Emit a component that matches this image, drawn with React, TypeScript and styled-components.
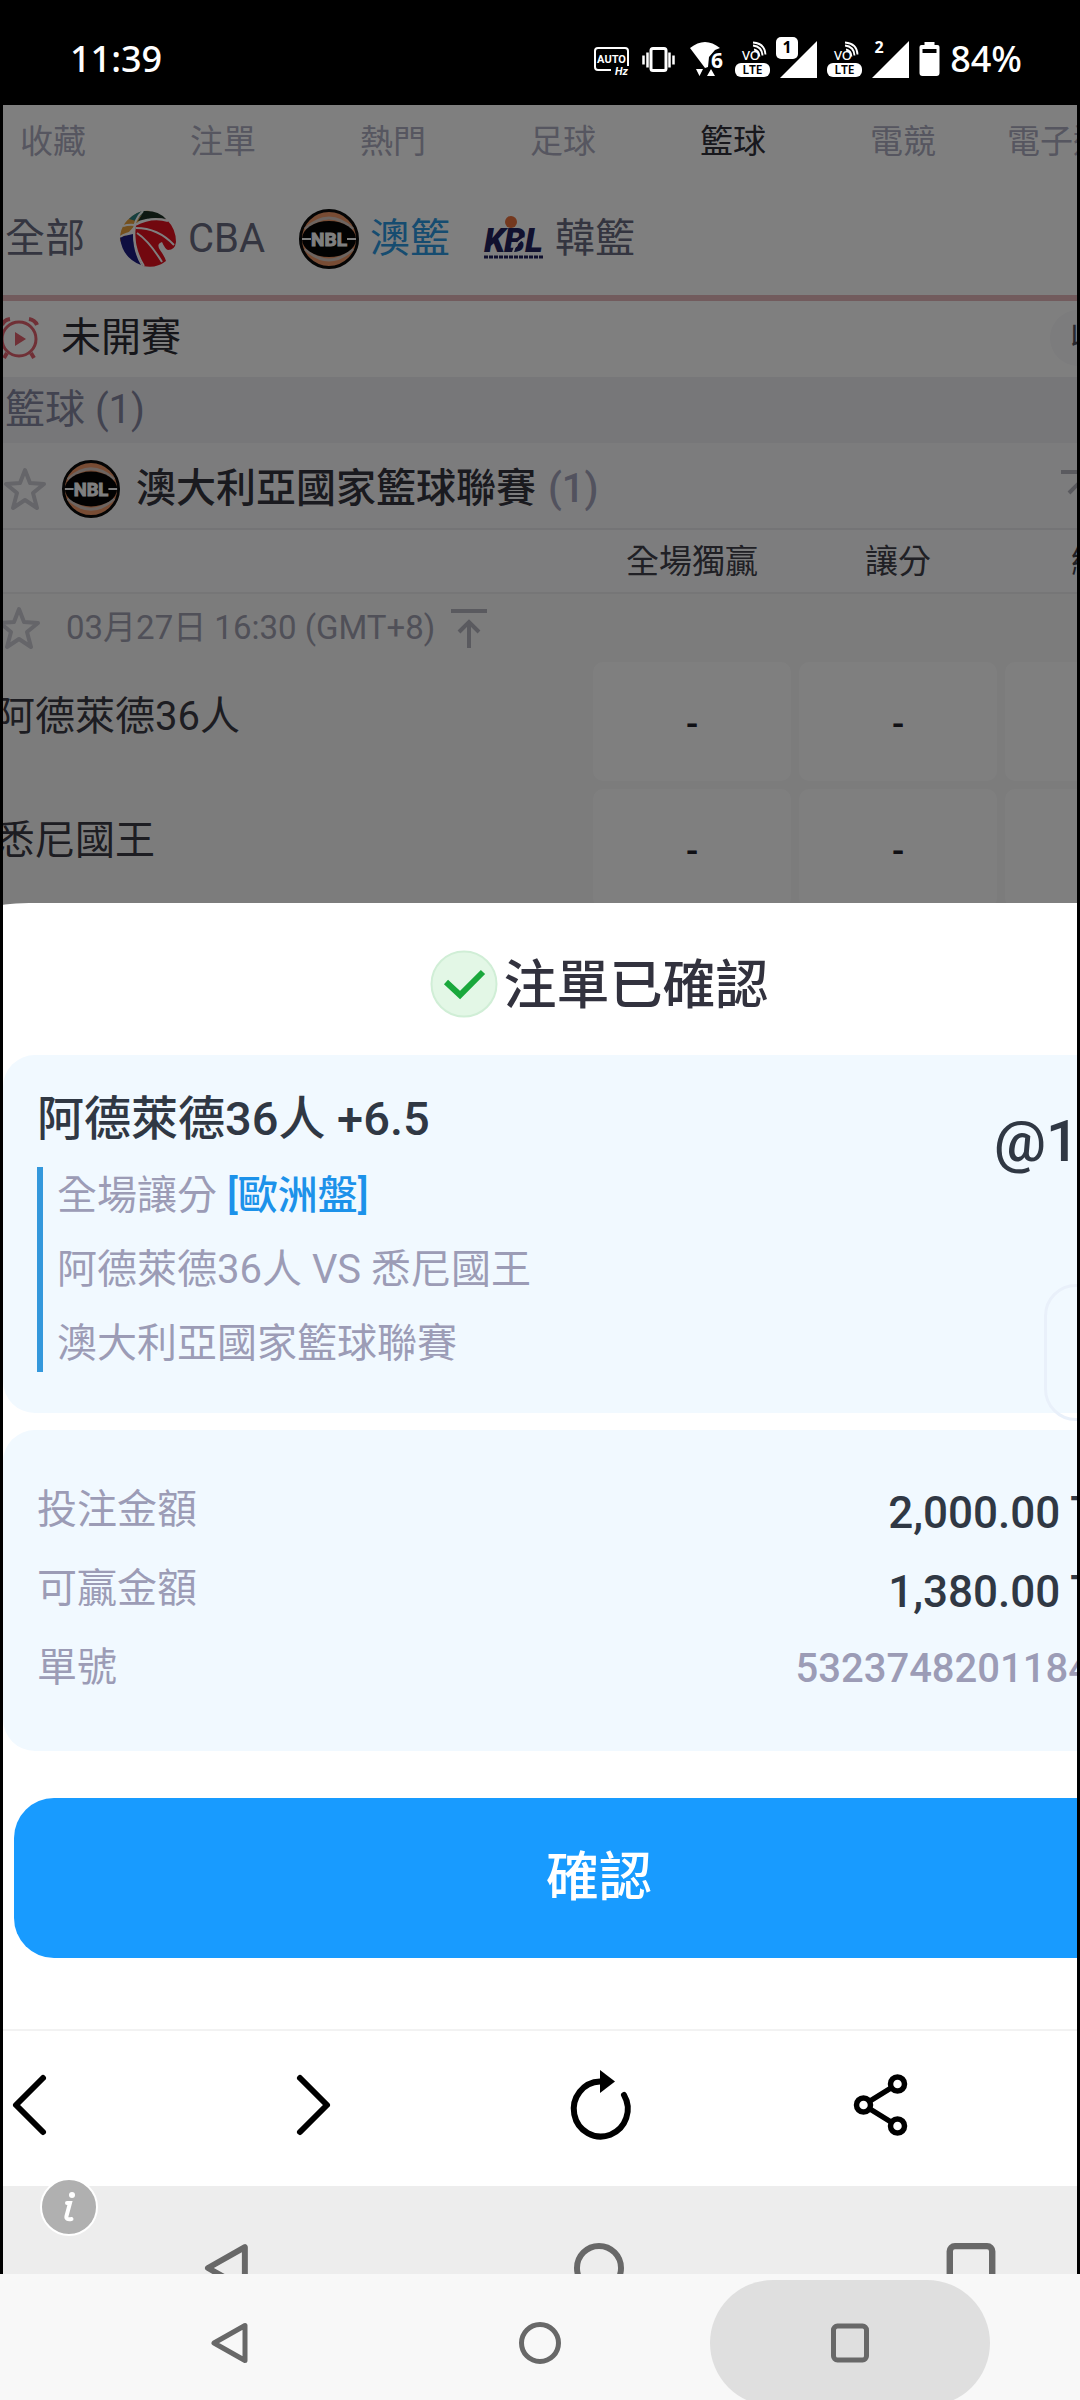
import React from "react";
import styled, { createGlobalStyle } from "styled-components";

const cjk = `Roboto, "Noto Sans CJK TC", sans-serif`;
const system = `"Noto Sans", "Noto Sans CJK TC", sans-serif`;

const Global = createGlobalStyle`
  * { box-sizing: border-box; }
  html, body { margin: 0; background: #000; }
  body { font-family: ${cjk}; overflow-x: hidden; }
  button { border: 0; background: none; padding: 0; margin: 0; font: inherit; color: inherit; cursor: pointer; }
  a { color: inherit; text-decoration: none; }
  svg { display: block; flex: none; overflow: visible; }
  h1, h2, h3, p { margin: 0; padding: 0; font-weight: inherit; font-size: inherit; }
`;

const Screen = styled.div`
  min-height: 100vh;
  display: flex;
  flex-direction: column;
`;

/* ---------- phone status bar ---------- */
const StatusBar = styled.header`
  height: 105px;
  padding: 13px 58px 0 70px;
  display: flex;
  align-items: center;
  justify-content: space-between;
  color: #fff;
  font: 500 36px/48px ${system};
`;
const StatusIcons = styled.div`
  display: flex;
  align-items: center;
  gap: 10px;
`;

/* ---------- browser frame ---------- */
const Frame = styled.div`
  position: relative;
  margin: 0 3px;
  overflow: hidden;
  background: #fff;
`;
const Page = styled.div`
  margin: 0 -126px 0 -8px;
`;
const Dim = styled.div`
  position: absolute;
  inset: 0;
  background: rgba(0, 0, 0, 0.5);
`;

const SportNav = styled.nav`
  height: 74px;
  padding-left: 58px;
  display: flex;
  align-items: center;
`;
const SportLink = styled.a<{ $active?: boolean }>`
  width: 170px;
  margin-left: -85px;
  margin-right: 85px;
  flex: none;
  text-align: center;
  white-space: nowrap;
  font-size: 33px;
  line-height: 48px;
  color: ${(p) => (p.$active ? "#30303a" : "#acacc0")};
`;

const LeagueNav = styled.nav`
  height: 122px;
  padding: 4px 0 0 10px;
  display: flex;
  align-items: center;
  gap: 34px;
  border-bottom: 6px solid #e4b6ba;
`;
const LeagueLink = styled.a<{ $active?: boolean }>`
  display: flex;
  align-items: center;
  gap: 11px;
  font-size: 40px;
  line-height: 56px;
  color: ${(p) => (p.$active ? "#2c98e0" : "#686a80")};
`;

const PhaseRow = styled.div`
  height: 76px;
  padding: 0 8px 2px 5px;
  display: flex;
  align-items: center;
  gap: 19px;
  font-size: 40px;
  line-height: 56px;
  color: #2c2c34;
`;
const FoldButton = styled.button`
  margin-left: auto;
  width: 145px;
  height: 56px;
  padding-left: 20px;
  border-radius: 28px;
  background: #f8f8fb;
  text-align: left;
  font-size: 33px;
  line-height: 48px;
  color: #50505c;
`;

const SportBar = styled.h2`
  padding: 5px 10px;
  background: #efeff3;
  font-size: 40px;
  line-height: 56px;
  color: #8486a0;
`;

const LeagueRow = styled.div`
  height: 87px;
  padding: 6px 106px 0 9px;
  display: flex;
  align-items: center;
  gap: 16px;
  background: #f9f9fa;
  border-bottom: 2px solid #e9e9ec;
  font-size: 40px;
  line-height: 56px;
  font-weight: 500;
  color: #34343e;
`;
const LeagueName = styled.h3`
  display: flex;
  gap: 12px;
`;
const Muted = styled.span`
  color: #a4a4bc;
`;
const RowEnd = styled.span`
  margin-left: auto;
`;

const MarketHead = styled.div`
  height: 64px;
  padding-top: 2px;
  display: grid;
  grid-template-columns: 1fr repeat(3, 198px);
  column-gap: 8px;
  align-items: center;
  border-bottom: 2px solid #ececef;
  background: #fbfbfc;
  text-align: center;
  font-size: 33px;
  line-height: 48px;
  color: #40404a;
`;

const Match = styled.section`
  background: #f8f8f9;
`;
const MatchTime = styled.div`
  height: 61px;
  padding: 6px 0 0 3px;
  display: flex;
  align-items: center;
  gap: 26px;
  font-size: 33px;
  line-height: 48px;
  color: #a0a0b0;
`;
const MatchTimeText = styled.span`
  display: flex;
  align-items: center;
  gap: 16px;
`;
const MatchBody = styled.div`
  display: grid;
  grid-template-columns: 1fr 610px;
`;
const Team = styled.p`
  font-size: 40px;
  line-height: 124px;
  color: #3a3a44;
`;
const OddsGrid = styled.div`
  padding-top: 7px;
  display: grid;
  grid-template-columns: repeat(3, 198px);
  grid-auto-rows: 119px;
  gap: 8px;
`;
const OddsCell = styled.button`
  padding-top: 6px;
  border-radius: 10px;
  background: #fff;
  font-size: 36px;
  line-height: 48px;
  font-weight: 500;
  color: #20202a;
`;

/* ---------- bet slip sheet ---------- */
const Sheet = styled.section`
  position: relative;
  margin-top: -5px;
  padding: 0 8px 71px;
  background: #fff;
  border-top-left-radius: 34px 5px;
`;
const SheetTitle = styled.h1`
  height: 152px;
  padding-top: 10px;
  display: flex;
  align-items: center;
  justify-content: center;
  gap: 6px;
  font-size: 53px;
  line-height: 72px;
  font-weight: 500;
  color: #32323e;
`;
const TitleText = styled.span`
  padding-top: 4px;
`;
const Card = styled.div`
  position: relative;
  border-radius: 32px;
  background: #f1f9ff;
`;
const BetCard = styled(Card)`
  padding: 36px 34px 41px;
  display: flex;
  justify-content: space-between;
  margin-bottom: 17px;
`;
const Pick = styled.h2`
  font-size: 47px;
  line-height: 56px;
  font-weight: 500;
  color: #303844;
`;
const BetDetails = styled.div`
  margin-top: 20px;
  padding-left: 14px;
  border-left: 6px solid #3498dc;
  display: grid;
  row-gap: 17px;
  font-size: 40px;
  line-height: 57px;
  color: #9c9cb6;
`;
const OddsType = styled.span`
  color: #1c92ea;
  font-weight: 500;
`;
const BetOdds = styled.p`
  padding-top: 12px;
  font-size: 58px;
  line-height: 76px;
  font-weight: 500;
  color: #303844;
`;
const CardAction = styled.button`
  position: absolute;
  right: 0;
  bottom: -8px;
  width: 151px;
  height: 137px;
  border: 3px solid #e9f0fa;
  border-radius: 32px;
`;
const Totals = styled(Card)`
  padding: 40px 34px 44px;
  margin-bottom: 47px;
`;
const TotalRow = styled.div`
  height: 79px;
  display: flex;
  align-items: center;
  justify-content: space-between;
  font-size: 40px;
  line-height: 56px;
  color: #9c9cb6;
`;
const Amount = styled.span`
  padding: 6px 64px 0 0;
  font-size: 44px;
  font-weight: 500;
  color: #303844;
`;
const OrderNo = styled.span`
  padding: 2px 70px 0 0;
  font-weight: 500;
`;
const Confirm = styled.button`
  display: block;
  width: calc(100% - 22px);
  height: 160px;
  margin: 0 auto;
  border-radius: 40px;
  background: #189bff;
  color: #fff;
  font-size: 53px;
  line-height: 72px;
  font-weight: 500;
`;

/* ---------- browser toolbar ---------- */
const Toolbar = styled.nav`
  position: relative;
  height: 157px;
  padding: 0 10px 8px 7px;
  display: flex;
  align-items: center;
  justify-content: space-between;
  background: #fff;
  border-top: 2px solid #f2f2f2;
`;
const ToolButton = styled.button`
  width: 56px;
  height: 72px;
  display: grid;
  place-items: center;
`;
const InnerNav = styled.nav`
  position: relative;
  height: 88px;
  padding-top: 52px;
  overflow: hidden;
  display: grid;
  grid-template-columns: 1fr 372px 372px 1fr;
  background: #ededed;
`;
const InnerKeys = styled.div`
  grid-column: 2 / 4;
  display: flex;
  justify-content: space-between;
  margin: 0 -30px;
`;
const Key = styled.button<{ $size: number }>`
  width: 60px;
  height: 60px;
  display: grid;
  place-items: center;
  svg { width: ${(p) => p.$size}px; height: ${(p) => p.$size}px; }
`;
const InfoBadge = styled.button`
  position: absolute;
  left: 37px;
  bottom: 38px;
  width: 58px;
  height: 58px;
  border: 2px solid #fff;
  border-radius: 50%;
  background: #b0b0b0;
  display: grid;
  place-items: center;
`;

/* ---------- phone navigation ---------- */
const SystemNav = styled.nav`
  height: 127px;
  padding: 6px 90px 0;
  overflow: hidden;
  display: grid;
  grid-template-columns: repeat(3, 280px);
  justify-content: center;
  column-gap: 30px;
  background: #f8f8f8;
`;
const SystemKey = styled.button<{ $pressed?: boolean }>`
  height: 126px;
  border-radius: 63px;
  background: ${(p) => (p.$pressed ? "#dfdfdf" : "transparent")};
  display: grid;
  place-items: center;
  svg { width: 42px; height: 42px; }
`;

/* ---------- drawings ---------- */
const AutoHz = () => (
  <svg width="38" height="36" viewBox="0 0 38 36" fill="none" stroke="#fff" strokeWidth="2">
    <path d="M18 29H5a3 3 0 0 1-3-3V10a3 3 0 0 1 3-3h27a3 3 0 0 1 3 3v15" />
    <text x="18.500" y="22" fontSize="11" fontWeight="700" fontFamily="Roboto" textAnchor="middle" fill="#fff" stroke="none">AUTO</text>
    <text x="22" y="34" fontSize="11" fontWeight="700" fontStyle="italic" fontFamily="Roboto" fill="#fff" stroke="none">Hz</text>
  </svg>
);
const Vibrate = () => (
  <svg width="38" height="36" viewBox="0 0 38 36" fill="none" stroke="#fff">
    <rect x="10" y="7.500" width="15" height="22" rx="2" strokeWidth="3" />
    <path d="M6.500 11.500v15M28.500 11.500v15" strokeWidth="2.500" />
    <path d="M2.500 14.500v9M32.500 14.500v9" strokeWidth="2.500" />
  </svg>
);
const Wifi = () => (
  <svg width="36" height="36" viewBox="0 0 36 36" fill="#fff">
    <path d="M1 7Q16-5 31 7l-5 2-6 7-1 10-3 1z" />
    <text x="22" y="27" fontSize="21" fontWeight="700" fontFamily="Noto Sans" stroke="#000" strokeWidth="3" paintOrder="stroke">6</text>
    <path d="M7 28h7l-3.500 7zM18 35h8l-4-7z" />
  </svg>
);
const Volte = () => (
  <svg width="35" height="36" viewBox="0 0 35 36" fill="none" stroke="#fff" strokeWidth="2">
    <text x="7" y="19" fontSize="13" fontWeight="500" fontFamily="Noto Sans" fill="#fff" stroke="none">VO</text>
    <path d="M19 8.500q5 1 5.500 7M18 4.500q9 1 9.500 10M18 1.500q12 1 12.500 12" strokeWidth="1.800" />
    <rect width="35" height="14" y="22" rx="6" fill="#fff" stroke="none" />
    <text x="17.500" y="33" fontSize="12" fontWeight="600" fontFamily="Noto Sans" textAnchor="middle" fill="#000" stroke="none">LTE</text>
  </svg>
);
const Signal = ({ sim }: { sim: string }) => (
  <svg width="37" height="36" viewBox="0 0 37 36" fill="#fff">
    <path d="M37 0v37H0z" />
    {sim === "1" && <rect x="-4" y="-4" width="22" height="22" rx="5" />}
    <text x="7" y="12" fontSize="16" fontWeight="700" fontFamily="Noto Sans" textAnchor="middle" fill={sim === "1" ? "#000" : "#fff"}>
      {sim}
    </text>
  </svg>
);
const Battery = () => (
  <svg width="21" height="36" viewBox="2 0 20 36" fill="#fff">
    <path d="M7 1h10v3h3a2 2 0 0 1 2 2v26a3 3 0 0 1-3 3H5a3 3 0 0 1-3-3V6a2 2 0 0 1 2-2h3z" />
    <path d="M5 8h14v4H5z" fill="#000" />
  </svg>
);

const CbaLogo = () => (
  <svg width="58" height="58" viewBox="0 0 58 58">
    <path d="M15 5Q23 0 31 1L18 13 1 32Q0 14 15 5z" fill="#e8a03c" />
    <path d="M10 9Q18 1 26 1L17 11z" fill="#2c8080" />
    <path d="M25 1q14-1 22 8Q34 6 19 11z" fill="#1c3024" />
    <path d="M1 27l13-3q0 18 8 31Q3 48 1 27z" fill="#1c1c80" />
    <path d="M17 15q16-9 31-5 9 9 9 22-1 8-8 8-3-1-6-8-6 2-2 8 5 7 6 11-10 8-23 5Q14 40 17 15z" fill="#e4101e" />
    <path d="M24 1Q14 10 15 24q1 18 10 32M1 27q6-4 15-5M4 16q6-2 12-1M16 15q17-9 33-4M17 18q22 0 38 17M18 23q12 8 25 29" fill="none" stroke="#fff" strokeWidth="2" />
  </svg>
);
const NblLogo = ({ size }: { size: number }) => (
  <svg width={size} height={size} viewBox="0 0 60 60">
    <circle cx="30" cy="30" r="28.500" fill="#f09868" stroke="#0a0a0a" strokeWidth="3" />
    <path d="M6 20Q30-2 54 20M6 40q24 22 48 0" fill="none" stroke="#d8c8c0" strokeWidth="3" />
    <ellipse cx="30" cy="30" rx="27" ry="18" fill="#050505" />
    <path d="M3 30h9M48 30h9" stroke="#fff" strokeWidth="2" />
    <text x="30" y="37" fontSize="19" fontWeight="700" fontFamily="Roboto" textAnchor="middle" fill="#fff" stroke="#fff" strokeWidth="1">NBL</text>
  </svg>
);
const KblLogo = () => (
  <svg width="60" height="46" viewBox="0 0 60 46">
    <text x="0" y="36" fontSize="34" fontWeight="900" fontStyle="italic" fontFamily="Roboto" fill="#23235e">K</text>
    <text x="20" y="36" fontSize="34" fontWeight="900" fontStyle="italic" fontFamily="Roboto" fill="#23235e">B</text>
    <text x="41" y="36" fontSize="34" fontWeight="900" fontStyle="italic" fontFamily="Roboto" fill="#23235e">L</text>
    <path d="M29 36q2-9 11-14" stroke="#fff" strokeWidth="2" fill="none" />
    <circle cx="27" cy="6" r="6" fill="#e8703c" />
    <path d="M0 41h59" stroke="#23235e" strokeWidth="3" strokeDasharray="4 1" />
  </svg>
);
const AlarmIcon = () => (
  <svg width="42" height="44" viewBox="0 0 42 44" fill="none" stroke="#e0606c" strokeWidth="3">
    <circle cx="19" cy="23" r="17" />
    <path d="M2 9q2-5 8-6M29 3q6 1 8 6M7 37l-3 5M31 37l3 5" strokeWidth="4" />
    <path d="M15 16v14l11-7z" fill="#e0606c" stroke="none" />
  </svg>
);
const Star = () => (
  <svg width="42" height="46" viewBox="0 0 42 46" fill="none" stroke="#cacad2" strokeWidth="4" strokeLinejoin="round">
    <path d="M21 4l5 13 14 1-11 9 4 15-12-8-12 8 4-15L2 18l14-1z" />
  </svg>
);
const ToTop = () => (
  <svg width="36" height="40" viewBox="0 0 36 40" fill="none" stroke="#b4b4be" strokeWidth="4">
    <path d="M0 3h36M18 40V15M8 24l10-10 10 10" />
  </svg>
);
const CheckBadge = () => (
  <svg width="68" height="70" viewBox="0 0 68 70" fill="none">
    <circle cx="34" cy="35" r="32.500" fill="#e3f7e6" stroke="#d0eed6" strokeWidth="2" />
    <path d="M16 33l14 13 23-23" stroke="#1aa83c" strokeWidth="6" />
  </svg>
);
const Chevron = ({ d }: { d: string }) => (
  <svg width="36" height="60" viewBox="0 0 36 60" fill="none" stroke="#000" strokeWidth="6" strokeLinecap="round" strokeLinejoin="round">
    <path d={d} />
  </svg>
);
const Reload = () => (
  <svg width="60" height="70" viewBox="0 0 60 70">
    <path d="M30 11.500A27 27.500 0 1 0 54 25" fill="none" stroke="#000" strokeWidth="6" strokeLinecap="round" />
    <path d="M30 0v23l15-11.500z" />
  </svg>
);
const Share = () => (
  <svg width="54" height="64" viewBox="0 0 54 64" fill="none" stroke="#000" strokeWidth="5.500">
    <circle cx="9.500" cy="32" r="7" />
    <circle cx="43.500" cy="11" r="7" />
    <circle cx="43.500" cy="53" r="7" />
    <path d="M16 28l21-13M16 36l21 13" />
  </svg>
);
const keyLine = { fill: "none", stroke: "#686868", strokeWidth: 5, strokeLinejoin: "round" as const };
const BackKey = () => (
  <svg viewBox="0 0 42 42" {...keyLine}><path d="M36 3.500v35L5 21z" /></svg>
);
const HomeKey = () => (
  <svg viewBox="0 0 42 42" {...keyLine}><circle cx="21" cy="21" r="18.500" /></svg>
);
const RecentKey = () => (
  <svg viewBox="0 0 42 42" {...keyLine}><rect x="4.500" y="4" width="33" height="34" rx="4" /></svg>
);

const sports = ["收藏", "注單", "熱門", "足球", "籃球", "電競", "電子遊戲"];

export default function App() {
  return (
    <Screen>
      <Global />
      <StatusBar>
        <span>11:39</span>
        <StatusIcons>
          <AutoHz />
          <Vibrate />
          <Wifi />
          <Volte />
          <Signal sim="1" />
          <Volte />
          <Signal sim="2" />
          <Battery />
          <span>84%</span>
        </StatusIcons>
      </StatusBar>

      <Frame>
        <Page>
          <SportNav>
            {sports.map((s) => (
              <SportLink key={s} href="#" $active={s === "籃球"}>{s}</SportLink>
            ))}
          </SportNav>
          <LeagueNav>
            <LeagueLink href="#">全部</LeagueLink>
            <LeagueLink href="#"><CbaLogo />CBA</LeagueLink>
            <LeagueLink href="#" $active><NblLogo size={60} />澳籃</LeagueLink>
            <LeagueLink href="#"><KblLogo />韓籃</LeagueLink>
          </LeagueNav>
          <PhaseRow>
            <AlarmIcon />
            未開賽
            <FoldButton>收</FoldButton>
          </PhaseRow>
          <SportBar>籃球 (1)</SportBar>
          <LeagueRow>
            <Star />
            <NblLogo size={58} />
            <LeagueName>澳大利亞國家籃球聯賽 <Muted>(1)</Muted></LeagueName>
            <RowEnd><ToTop /></RowEnd>
          </LeagueRow>
          <MarketHead>
            <span />
            <span>全場獨贏</span>
            <span>讓分</span>
            <span>總分</span>
          </MarketHead>
          <Match>
            <MatchTime>
              <Star />
              <MatchTimeText>03月27日 16:30 (GMT+8) <ToTop /></MatchTimeText>
            </MatchTime>
            <MatchBody>
              <div>
                <Team>阿德萊德36人</Team>
                <Team>悉尼國王</Team>
              </div>
              <OddsGrid>
                {["a1", "a2", "a3", "b1", "b2", "b3"].map((id) => (
                  <OddsCell key={id}>-</OddsCell>
                ))}
              </OddsGrid>
            </MatchBody>
          </Match>
        </Page>
        <Dim />
        <Page>
          <Sheet>
            <SheetTitle><CheckBadge /><TitleText>注單已確認</TitleText></SheetTitle>
            <BetCard>
              <div>
                <Pick>阿德萊德36人 +6.5</Pick>
                <BetDetails>
                  <p>全場讓分 <OddsType>[歐洲盤]</OddsType></p>
                  <p>阿德萊德36人 VS 悉尼國王</p>
                  <p>澳大利亞國家籃球聯賽</p>
                </BetDetails>
              </div>
              <BetOdds>@1.69</BetOdds>
              <CardAction aria-label="分享" />
            </BetCard>
            <Totals>
              <TotalRow><span>投注金額</span><Amount>2,000.00 T</Amount></TotalRow>
              <TotalRow><span>可贏金額</span><Amount>1,380.00 T</Amount></TotalRow>
              <TotalRow><span>單號</span><OrderNo>5323748201184</OrderNo></TotalRow>
            </Totals>
            <Confirm>確認</Confirm>
          </Sheet>
          <Toolbar>
            <ToolButton aria-label="上一頁"><Chevron d="M31 3 4 30l27 27" /></ToolButton>
            <ToolButton aria-label="下一頁"><Chevron d="M4 3l27 27L4 57" /></ToolButton>
            <ToolButton aria-label="重新整理"><Reload /></ToolButton>
            <ToolButton aria-label="分享"><Share /></ToolButton>
            <ToolButton aria-label="選單" />
          </Toolbar>
          <InnerNav>
            <InnerKeys>
              <Key $size={50} aria-label="返回"><BackKey /></Key>
              <Key $size={50} aria-label="主畫面"><HomeKey /></Key>
              <Key $size={54} aria-label="最近"><RecentKey /></Key>
            </InnerKeys>
          </InnerNav>
        </Page>
        <InfoBadge aria-label="資訊">
          <svg width="20" height="34" viewBox="0 0 20 34" fill="none" stroke="#fff" strokeWidth="4" strokeLinecap="round">
            <circle cx="13" cy="5" r="3" fill="#fff" stroke="none" />
            <path d="M8 13h3L7.500 26q-1 4 5 3" />
          </svg>
        </InfoBadge>
      </Frame>

      <SystemNav>
        <SystemKey aria-label="返回"><BackKey /></SystemKey>
        <SystemKey aria-label="主畫面"><HomeKey /></SystemKey>
        <SystemKey $pressed aria-label="最近"><RecentKey /></SystemKey>
      </SystemNav>
    </Screen>
  );
}
